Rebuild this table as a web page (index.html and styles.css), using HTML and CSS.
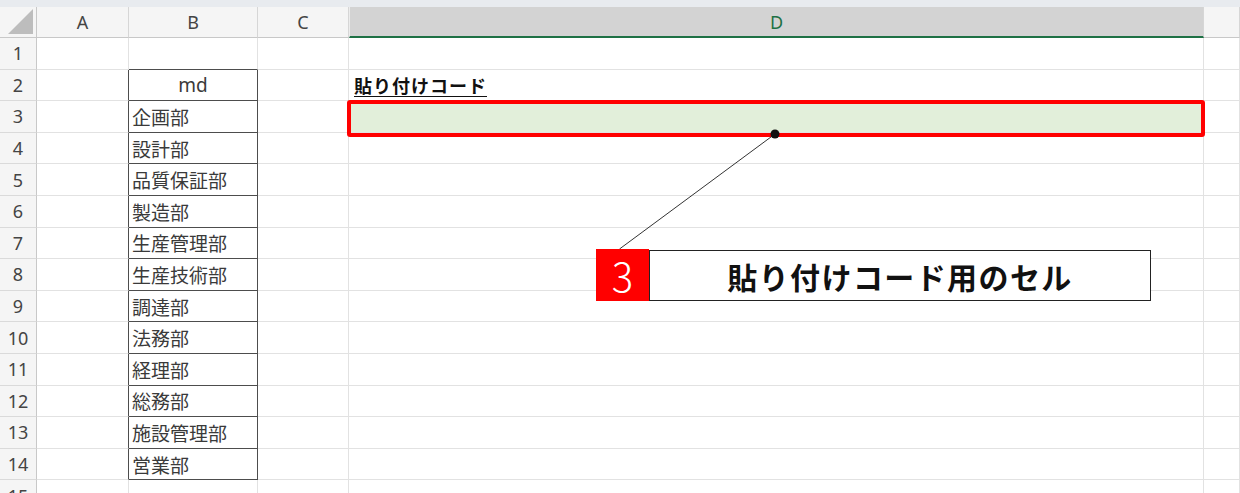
FILE: index.html
```html
<!DOCTYPE html>
<html lang="ja">
<head>
<meta charset="utf-8">
<title>Sheet</title>
<link rel="stylesheet" href="styles.css">
</head>
<body>
<div class="page">
  <div class="band"></div>
  <div class="sheet">
    <div class="hd corner"><span class="tri"></span></div>
    <div class="hd col">A</div>
    <div class="hd col">B</div>
    <div class="hd col">C</div>
    <div class="hd col sel">D</div>
    <div class="hd col"></div>

    <div class="rn">1</div><div class="c"></div><div class="c boxtop"></div><div class="c"></div><div class="c"></div><div class="c"></div>
    <div class="rn">2</div><div class="c bl"></div><div class="c bx center">md</div><div class="c"></div><div class="c title"><span>貼り付けコード</span></div><div class="c"></div>
    <div class="rn">3</div><div class="c bl"></div><div class="c bx">企画部</div><div class="c"></div><div class="c fill"></div><div class="c"></div>
    <div class="rn">4</div><div class="c bl"></div><div class="c bx">設計部</div><div class="c"></div><div class="c"></div><div class="c"></div>
    <div class="rn">5</div><div class="c bl"></div><div class="c bx">品質保証部</div><div class="c"></div><div class="c"></div><div class="c"></div>
    <div class="rn">6</div><div class="c bl"></div><div class="c bx">製造部</div><div class="c"></div><div class="c"></div><div class="c"></div>
    <div class="rn">7</div><div class="c bl"></div><div class="c bx">生産管理部</div><div class="c"></div><div class="c"></div><div class="c"></div>
    <div class="rn">8</div><div class="c bl"></div><div class="c bx">生産技術部</div><div class="c"></div><div class="c"></div><div class="c"></div>
    <div class="rn">9</div><div class="c bl"></div><div class="c bx">調達部</div><div class="c"></div><div class="c"></div><div class="c"></div>
    <div class="rn">10</div><div class="c bl"></div><div class="c bx">法務部</div><div class="c"></div><div class="c"></div><div class="c"></div>
    <div class="rn">11</div><div class="c bl"></div><div class="c bx">経理部</div><div class="c"></div><div class="c"></div><div class="c"></div>
    <div class="rn">12</div><div class="c bl"></div><div class="c bx">総務部</div><div class="c"></div><div class="c"></div><div class="c"></div>
    <div class="rn">13</div><div class="c bl"></div><div class="c bx">施設管理部</div><div class="c"></div><div class="c"></div><div class="c"></div>
    <div class="rn">14</div><div class="c bl"></div><div class="c bx">営業部</div><div class="c"></div><div class="c"></div><div class="c"></div>
    <div class="rn">15</div><div class="c"></div><div class="c"></div><div class="c"></div><div class="c"></div><div class="c"></div>
  </div>

  <div class="hilite"></div>
  <svg class="leader" width="1240" height="493" viewBox="0 0 1240 493">
    <line x1="775" y1="134" x2="619.5" y2="249" stroke="#333" stroke-width="1"/>
    <circle cx="775" cy="134" r="4.5" fill="#111"/>
  </svg>
  <div class="callout">
    <div class="num">3</div>
    <div class="label">貼り付けコード用のセル</div>
  </div>
</div>
</body>
</html>
```

FILE: styles.css
```css
* { box-sizing: border-box; }
html, body { margin: 0; padding: 0; }
body {
  width: 1240px;
  height: 493px;
  overflow: hidden;
  background: #ffffff;
  font-family: "Noto Sans CJK JP", "Noto Sans", sans-serif;
}
.page {
  position: relative;
  width: 1240px;
  height: 493px;
  overflow: hidden;
}
.band {
  height: 7px;
  background: #e8ebef;
}
.sheet {
  display: grid;
  grid-template-columns: 37px 92px 129px 91px 855px 1fr;
  grid-template-rows: 31px repeat(15, 31.6px);
}
.hd {
  background: #f5f5f5;
  border-right: 1px solid #d6d6d6;
  border-bottom: 1px solid #c8c8c8;
  display: flex;
  align-items: center;
  justify-content: center;
  font-family: "Noto Sans", "Liberation Sans", sans-serif;
  font-size: 18px;
  color: #444;
}
.corner {
  position: relative;
  border-right: 1px solid #c8c8c8;
}
.tri {
  position: absolute;
  right: 3px;
  bottom: 3px;
  width: 0;
  height: 0;
  border-style: solid;
  border-width: 0 0 25px 25px;
  border-color: transparent transparent #bdbdbd transparent;
}
.col.sel {
  background: #d3d3d3;
  color: #1e7145;
  border-bottom: 2px solid #1e7145;
  border-left: 1px solid #ececec;
}
.rn {
  background: #f5f5f5;
  border-right: 1px solid #c8c8c8;
  border-bottom: 1px solid #dadada;
  display: flex;
  align-items: center;
  justify-content: center;
  font-family: "Noto Sans", "Liberation Sans", sans-serif;
  font-size: 18px;
  color: #444;
}
.c {
  border-right: 1px solid #e2e2e2;
  border-bottom: 1px solid #e2e2e2;
  display: flex;
  align-items: center;
  font-size: 19px;
  color: #3a3a3a;
  white-space: nowrap;
}
.c.boxtop { border-bottom-color: #4d4d4d; }
.c.bl { border-right-color: #4d4d4d; }
.c.bx {
  border-right-color: #4d4d4d;
  border-bottom-color: #4d4d4d;
  padding-left: 3px;
}
.c.center {
  justify-content: center;
  font-family: "Noto Sans", sans-serif;
  padding-left: 0;
}
.c.title {
  padding-left: 5px;
  font-size: 18px;
  font-weight: 700;
  color: #111;
  letter-spacing: 1px;
}
.c.title span {
  text-decoration: underline;
  text-underline-offset: 3px;
}
.c.fill { background: #e2efda; }

.hilite {
  position: absolute;
  left: 347px;
  top: 100px;
  width: 858px;
  height: 37px;
  border: 4px solid #ff0000;
  border-radius: 3px;
}
.leader {
  position: absolute;
  left: 0;
  top: 0;
}
.callout {
  position: absolute;
  left: 596px;
  top: 249px;
  display: flex;
  align-items: stretch;
}
.num {
  width: 53px;
  height: 52px;
  background: #ff0000;
  color: #ffffff;
  display: flex;
  align-items: center;
  justify-content: center;
  font-family: "Noto Sans CJK JP", "Noto Sans", sans-serif;
  font-weight: 300;
  font-size: 40px;
}
.label {
  width: 502px;
  height: 51px;
  margin-top: 1px;
  background: #ffffff;
  border: 1.5px solid #222;
  display: flex;
  align-items: center;
  justify-content: center;
  font-size: 30px;
  font-weight: 700;
  letter-spacing: 1.4px;
  color: #111;
}
```
